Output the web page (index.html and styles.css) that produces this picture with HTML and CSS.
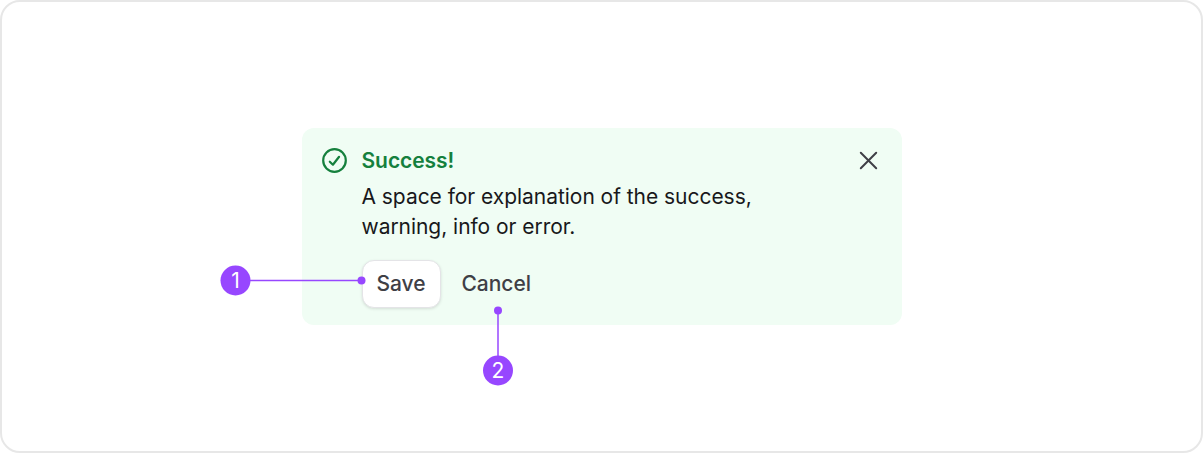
FILE: index.html
```html
<!DOCTYPE html>
<html lang="en">
<head>
<meta charset="utf-8">
<title>Alert actions</title>
<link rel="stylesheet" href="styles.css">
</head>
<body>
<main class="frame">
  <section class="alert">
    <svg class="status" viewBox="0.5 0.5 26 26" fill="none" stroke="currentColor" stroke-width="2.2" stroke-linecap="round" stroke-linejoin="round"><circle cx="13" cy="13" r="11.3"/><path d="M8.3 14.2 11.4 17.2 17.6 9.3"/></svg>
    <div class="content">
      <h1 class="title">Success!</h1>
      <p class="text">A space for explanation of the success,<br>warning, info or error.</p>
      <div class="actions">
        <button class="btn primary">Save</button>
        <button class="btn cancel">Cancel</button>
      </div>
    </div>
    <svg class="close" viewBox="0.5 0.5 18 18" fill="none" stroke="currentColor" stroke-width="2" stroke-linecap="round"><path d="M1.3 1.3l15.4 15.4M16.7 1.3l-15.4 15.4"/></svg>
  </section>
  <svg class="marker marker-one" width="146" height="31"><circle cx="15.5" cy="15.5" r="15"/><path d="M30 14.75h111v1.5H30z"/><circle cx="141.5" cy="15.5" r="4"/><text x="15.5" y="23">1</text></svg>
  <svg class="marker marker-two" width="30" height="81"><circle cx="15" cy="5.5" r="4"/><path d="M14.25 5.5h1.5v46h-1.5z"/><circle cx="15" cy="65.5" r="15"/><text x="15" y="73">2</text></svg>
</main>
</body>
</html>
```
FILE: styles.css
```css
* { box-sizing: border-box; }
body { margin: 0; background: #fff; font-family: Inter, sans-serif; }
.frame { position: relative; width: 1203px; height: 453px; padding: 125.5px 299.5px; border: 2px solid #e7e7e7; border-radius: 20px; background: #fff; }
.alert { display: flex; height: 197.5px; width: 600px; padding: 18px 24px 18px 20px; border-radius: 12px; background: #f0fdf4; }
.status { width: 26px; height: 26px; margin-top: 2px; color: #15803d; flex: none; overflow: visible; }
.content { flex: 1; margin-left: 14px; }
.title { margin: 0; font-size: 21px; line-height: 30px; font-weight: 600; letter-spacing: -.06px; color: #15803d; }
.text { margin: 6px 0 18px; font-size: 21px; line-height: 30px; letter-spacing: -.04px; color: #18181b; }
.actions { display: flex; gap: 6px; }
.btn { height: 48px; padding: 0 14px; border: 1px solid transparent; border-radius: 12px; background: none; font: 500 21px/30px Inter, sans-serif; letter-spacing: -.04px; color: #3f3f46; }
.primary { width: 79px; border: 1.5px solid #e4e4e7; background: #fff; box-shadow: 0 1px 3px rgba(0,0,0,.12); }
.close { width: 18px; height: 18px; margin-top: 6px; color: #3f3f46; flex: none; overflow: visible; }
.marker { position: absolute; fill: #9747ff; overflow: visible; }
.marker-one { left: 218px; top: 263px; }
.marker-two { left: 481px; top: 303px; }
.marker text { fill: #fff; font-size: 21px; text-anchor: middle; }
```
